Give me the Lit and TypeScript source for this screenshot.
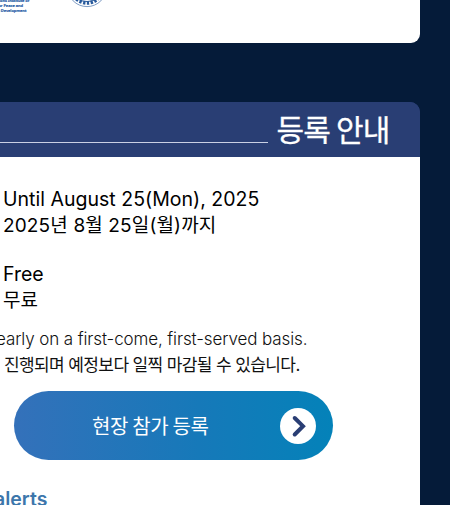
import { LitElement, html, css } from "lit";
import { customElement } from "lit/decorators.js";

@customElement("app-root")
export class AppRoot extends LitElement {
  static styles = css`
    :host {
      display: block;
      width: 450px;
      height: 505px;
      overflow: hidden;
      background: #051b39;
      font-family: Inter, "Noto Sans CJK KR", sans-serif;
      color: #111;
    }
    .page { display: flex; flex-direction: column; gap: 59.5px; width: 420px; }
    .sponsors {
      display: flex;
      box-sizing: border-box;
      height: 42.5px;
      background: #fff;
      border-radius: 0 0 9px 0;
      overflow: hidden;
    }
    .org {
      width: 69px;
      margin-top: -2px;
      font: 700 4px/5px "Noto Sans", sans-serif;
      letter-spacing: -0.1px;
      color: #1f5ba5;
      white-space: nowrap;
      -webkit-text-stroke: 0.15px #1f5ba5;
    }
    .org div { height: 5px; margin-left: -3px; }
    .seal { display: block; width: 36px; height: 8px; }
    .card { height: 420px; background: #293e74; border-radius: 0 10px 0 0; overflow: hidden; }
    .head {
      display: flex;
      height: 54.5px;
      box-sizing: border-box;
      background: #293e74;
      color: #fff;
    }
    .rule { width: 268px; height: 1px; margin-top: 39.5px; background: #c9d0e4; }
    h2 {
      margin: 0 0 0 8.5px;
      font: 400 30px/54px "Noto Sans CJK KR", sans-serif;
      height: 54px;
      line-height: 53px;
      letter-spacing: -0.8px;
      white-space: nowrap;
      -webkit-text-stroke: 0.3px #fff;
    }
    .body { height: 366px; background: #fff; }
    .line { white-space: pre; height: 26px; line-height: 26px; }
    .term { padding: 29.5px 0 0 3px; font-size: 19.5px; color: #000; }
    .term + .term { padding-top: 23px; }
    .ko { font-size: 19px; }
    .term .ko { line-height: 28px; }
    .note { padding-top: 13px; font-size: 17px; font-weight: 300; color: #111; }
    .note .en { margin-left: -4px; letter-spacing: -0.11px; }
    .note .ko { margin-left: 4px; font-size: 17px; font-weight: 400; letter-spacing: -0.61px; }
    .join {
      display: flex;
      align-items: center;
      justify-content: space-between;
      box-sizing: border-box;
      width: 319px;
      height: 69px;
      margin: 13px 0 0 14px;
      padding: 0 17px 0 78px;
      border: 0;
      border-radius: 35px;
      background: linear-gradient(90deg, #3471ba, #1679b9 58%, #0482b9);
      color: #fff;
      font: 400 20px/30px "Noto Sans CJK KR", sans-serif;
      letter-spacing: -0.35px;
      white-space: nowrap;
    }
    .arrow { display: block; width: 36px; height: 36px; }
    .alerts { margin: 26px 0 0 -6px; font-size: 19.5px; font-weight: 600; color: #3d76ab; }
    .t1 { letter-spacing: 0.02px; }
    .t2 { letter-spacing: 0.14px; }
  `;

  render() {
    return html`
      <div class="page">
        <section class="sponsors">
          <div class="org">
            <div>sions Institute of</div>
            <div>for Peace and</div>
            <div>&amp; Development</div>
          </div>
          <svg class="seal" viewBox="0 0 36 8">
            <circle cx="18" cy="-13" r="19.6" fill="none" stroke="#5d83b5" stroke-width=".8" />
            <circle cx="18" cy="-13" r="16" fill="none" stroke="#285a9c" stroke-width="3.6" stroke-dasharray="2.3 1.5" />
            <path d="M8-1Q18 4 28-1" fill="none" stroke="#285a9c" />
          </svg>
        </section>
        <section class="card">
          <header class="head">
            <div class="rule"></div>
            <h2>등록 안내</h2>
          </header>
          <div class="body">
            <div class="term">
              <div class="line t1">Until August 25(Mon), 2025</div>
              <div class="line ko t2">2025년 8월 25일(월)까지</div>
            </div>
            <div class="term">
              <div class="line">Free</div>
              <div class="line ko">무료</div>
            </div>
            <div class="note">
              <div class="line en">early on a first-come, first-served basis.</div>
              <div class="line ko">진행되며 예정보다 일찍 마감될 수 있습니다.</div>
            </div>
            <button class="join">
              <span>현장 참가 등록</span>
              <svg class="arrow" viewBox="0 0 36 36">
                <circle cx="18" cy="18" r="18" fill="#fff" />
                <path d="M14.7 10L23 18.2 14.7 26.5" fill="none" stroke="#293e74" stroke-width="4" stroke-linecap="round" stroke-linejoin="miter" />
              </svg>
            </button>
            <div class="line alerts">alerts</div>
          </div>
        </section>
      </div>
    `;
  }
}
